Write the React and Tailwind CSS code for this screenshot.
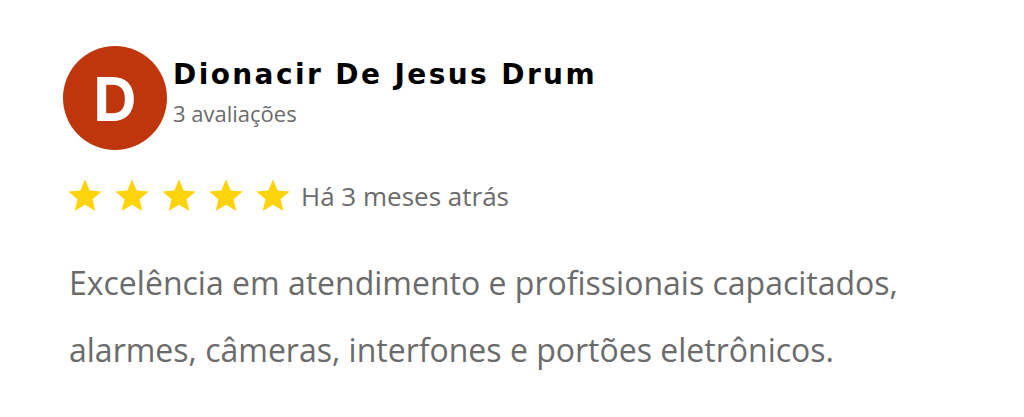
import React from "react";

const Star = () => (
  <svg viewBox="0 0 24 24" className="w-[40px] h-[40px] shrink-0" fill="#fdd30a">
    <path d="M12 17.27L18.18 21l-1.64-7.03L22 9.24l-7.19-.61L12 2 9.19 8.63 2 9.24l5.46 4.73L5.82 21z" />
  </svg>
);

const App = () => {
  return (
    <div className="w-[1024px] h-[417px] bg-white pl-[63px] pt-[46px] font-['Open_Sans',sans-serif]">
      <div className="flex items-start">
        <div className="w-[104px] h-[104px] rounded-full bg-[#bf360c] flex items-center justify-center shrink-0">
          <span className="text-white font-bold text-[60px] leading-none font-['Inter',sans-serif] mt-[1px]">D</span>
        </div>
        <div className="ml-[6px] pt-[12px] flex flex-col">
          <span className="font-['DejaVu_Sans',sans-serif] font-bold text-[28px] leading-[34px] tracking-[2.4px] text-black">
            Dionacir De Jesus Drum
          </span>
          <span className="text-[22px] leading-[30px] text-[#6b6b6b] mt-[6px]">3 avaliações</span>
        </div>
      </div>
      <div className="flex items-center mt-[26px] ml-[2px]">
        <div className="flex gap-[7px]">
          <Star />
          <Star />
          <Star />
          <Star />
          <Star />
        </div>
        <span className="ml-[8px] text-[26px] leading-[34px] text-[#6b6b6b]">Há 3 meses atrás</span>
      </div>
      <div className="mt-[33px] ml-[6px] text-[32px] leading-[67px] text-[#6b6b6b]">
        <p>Excelência em atendimento e profissionais capacitados,</p>
        <p>alarmes, câmeras, interfones e portões eletrônicos.</p>
      </div>
    </div>
  );
};

export default App;
